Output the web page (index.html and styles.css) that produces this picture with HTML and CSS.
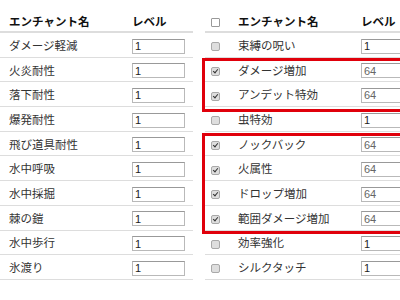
FILE: index.html
```html
<!DOCTYPE html>
<html lang="ja">

<head>
    <meta charset="UTF-8">
    <meta name="viewport" content="width=device-width, initial-scale=1.0">
    <link rel="stylesheet" href="styles.css">
    <title>エンチャント一覧</title>
</head>

<body>
    <div class="wrap">
        <!-- 耐性系 -->
        <table class="ench left">
            <thead>
                <tr>
                    <th class="name">エンチャント名</th>
                    <th class="level">レベル</th>
                </tr>
            </thead>
            <tbody>
                <tr><td class="name">ダメージ軽減</td><td class="level"><input type="text" value="1"></td></tr>
                <tr><td class="name">火炎耐性</td><td class="level"><input type="text" value="1"></td></tr>
                <tr><td class="name">落下耐性</td><td class="level"><input type="text" value="1"></td></tr>
                <tr><td class="name">爆発耐性</td><td class="level"><input type="text" value="1"></td></tr>
                <tr><td class="name">飛び道具耐性</td><td class="level"><input type="text" value="1"></td></tr>
                <tr><td class="name">水中呼吸</td><td class="level"><input type="text" value="1"></td></tr>
                <tr><td class="name">水中採掘</td><td class="level"><input type="text" value="1"></td></tr>
                <tr><td class="name">棘の鎧</td><td class="level"><input type="text" value="1"></td></tr>
                <tr><td class="name">水中歩行</td><td class="level"><input type="text" value="1"></td></tr>
                <tr><td class="name">氷渡り</td><td class="level"><input type="text" value="1"></td></tr>
            </tbody>
        </table>

        <!-- 武器・道具系 -->
        <div class="right-box">
            <table class="ench right">
                <thead>
                    <tr>
                        <th class="check"><span class="cb head"></span></th>
                        <th class="name">エンチャント名</th>
                        <th class="level">レベル</th>
                    </tr>
                </thead>
                <tbody>
                    <tr><td class="check"><span class="cb"></span></td><td class="name">束縛の呪い</td><td class="level"><input type="text" value="1"></td></tr>
                    <tr><td class="check"><span class="cb on"></span></td><td class="name">ダメージ増加</td><td class="level"><input class="max" type="text" value="64"></td></tr>
                    <tr><td class="check"><span class="cb on"></span></td><td class="name">アンデット特効</td><td class="level"><input class="max" type="text" value="64"></td></tr>
                    <tr><td class="check"><span class="cb"></span></td><td class="name">虫特効</td><td class="level"><input type="text" value="1"></td></tr>
                    <tr><td class="check"><span class="cb on"></span></td><td class="name">ノックバック</td><td class="level"><input class="max" type="text" value="64"></td></tr>
                    <tr><td class="check"><span class="cb on"></span></td><td class="name">火属性</td><td class="level"><input class="max" type="text" value="64"></td></tr>
                    <tr><td class="check"><span class="cb on"></span></td><td class="name">ドロップ増加</td><td class="level"><input class="max" type="text" value="64"></td></tr>
                    <tr><td class="check"><span class="cb on"></span></td><td class="name">範囲ダメージ増加</td><td class="level"><input class="max" type="text" value="64"></td></tr>
                    <tr><td class="check"><span class="cb"></span></td><td class="name">効率強化</td><td class="level"><input type="text" value="1"></td></tr>
                    <tr><td class="check"><span class="cb"></span></td><td class="name">シルクタッチ</td><td class="level"><input type="text" value="1"></td></tr>
                </tbody>
            </table>
            <!-- 赤枠の強調 -->
            <div class="mark mark1"></div>
            <div class="mark mark2"></div>
        </div>
    </div>
</body>

</html>
```

FILE: styles.css
```css
html,
body {
    margin: 0;
    padding: 0;
    overflow: hidden;
    background: #fff;
}

body {
    font-family: "Noto Sans CJK JP", "Liberation Sans", sans-serif;
    font-size: 11.5px;
    color: #333;
}

.wrap {
    display: flex;
    align-items: flex-start;
    gap: 12px;
}

.ench {
    border-collapse: separate;
    border-spacing: 0;
    table-layout: fixed;
}

.ench th {
    height: 33px;
    padding: 0 0 2px;
    box-sizing: border-box;
    vertical-align: bottom;
    text-align: left;
    font-weight: bold;
    color: #111;
    line-height: 16px;
    border-bottom: 2px solid #ddd;
}

.ench td {
    height: 24.7px;
    padding: 0;
    box-sizing: border-box;
    vertical-align: middle;
    line-height: 16px;
    border-bottom: 1px solid #ddd;
}

.left {
    width: 193px;
}

.left .name {
    width: 132px;
    padding-left: 9px;
}

.left .level {
    width: 61px;
}

.right-box {
    position: relative;
    flex-shrink: 0;
}

.right {
    width: 220px;
}

.right .check {
    width: 33px;
    padding-left: 6px;
}

.right .name {
    width: 123px;
}

.right .level {
    width: 64px;
}

input {
    box-sizing: border-box;
    width: 53px;
    height: 15px;
    margin: 0;
    padding: 0 2px;
    border: 1px solid #b9b9b9;
    border-top-color: #999;
    font-family: "Liberation Sans", Arial, sans-serif;
    font-size: 11px;
    color: #222;
    vertical-align: middle;
}

input.max {
    color: #666;
}

.cb {
    display: inline-block;
    position: relative;
    width: 7px;
    height: 7px;
    border: 1px solid #a9a9a9;
    border-radius: 2px;
    background: #dedede;
    vertical-align: middle;
}

.cb.head {
    background: #fff;
    border-color: #999;
    border-radius: 1px;
}

.cb.on::after {
    content: "";
    position: absolute;
    left: 2px;
    top: 0;
    width: 2px;
    height: 4px;
    border: solid #333;
    border-width: 0 1.5px 1.5px 0;
    transform: rotate(40deg);
}

.mark {
    position: absolute;
    left: -3px;
    width: 230px;
    border: 3px solid #e0000b;
    box-sizing: border-box;
}

.mark1 {
    top: 58px;
    height: 54px;
}

.mark2 {
    top: 133px;
    height: 101px;
}
```
